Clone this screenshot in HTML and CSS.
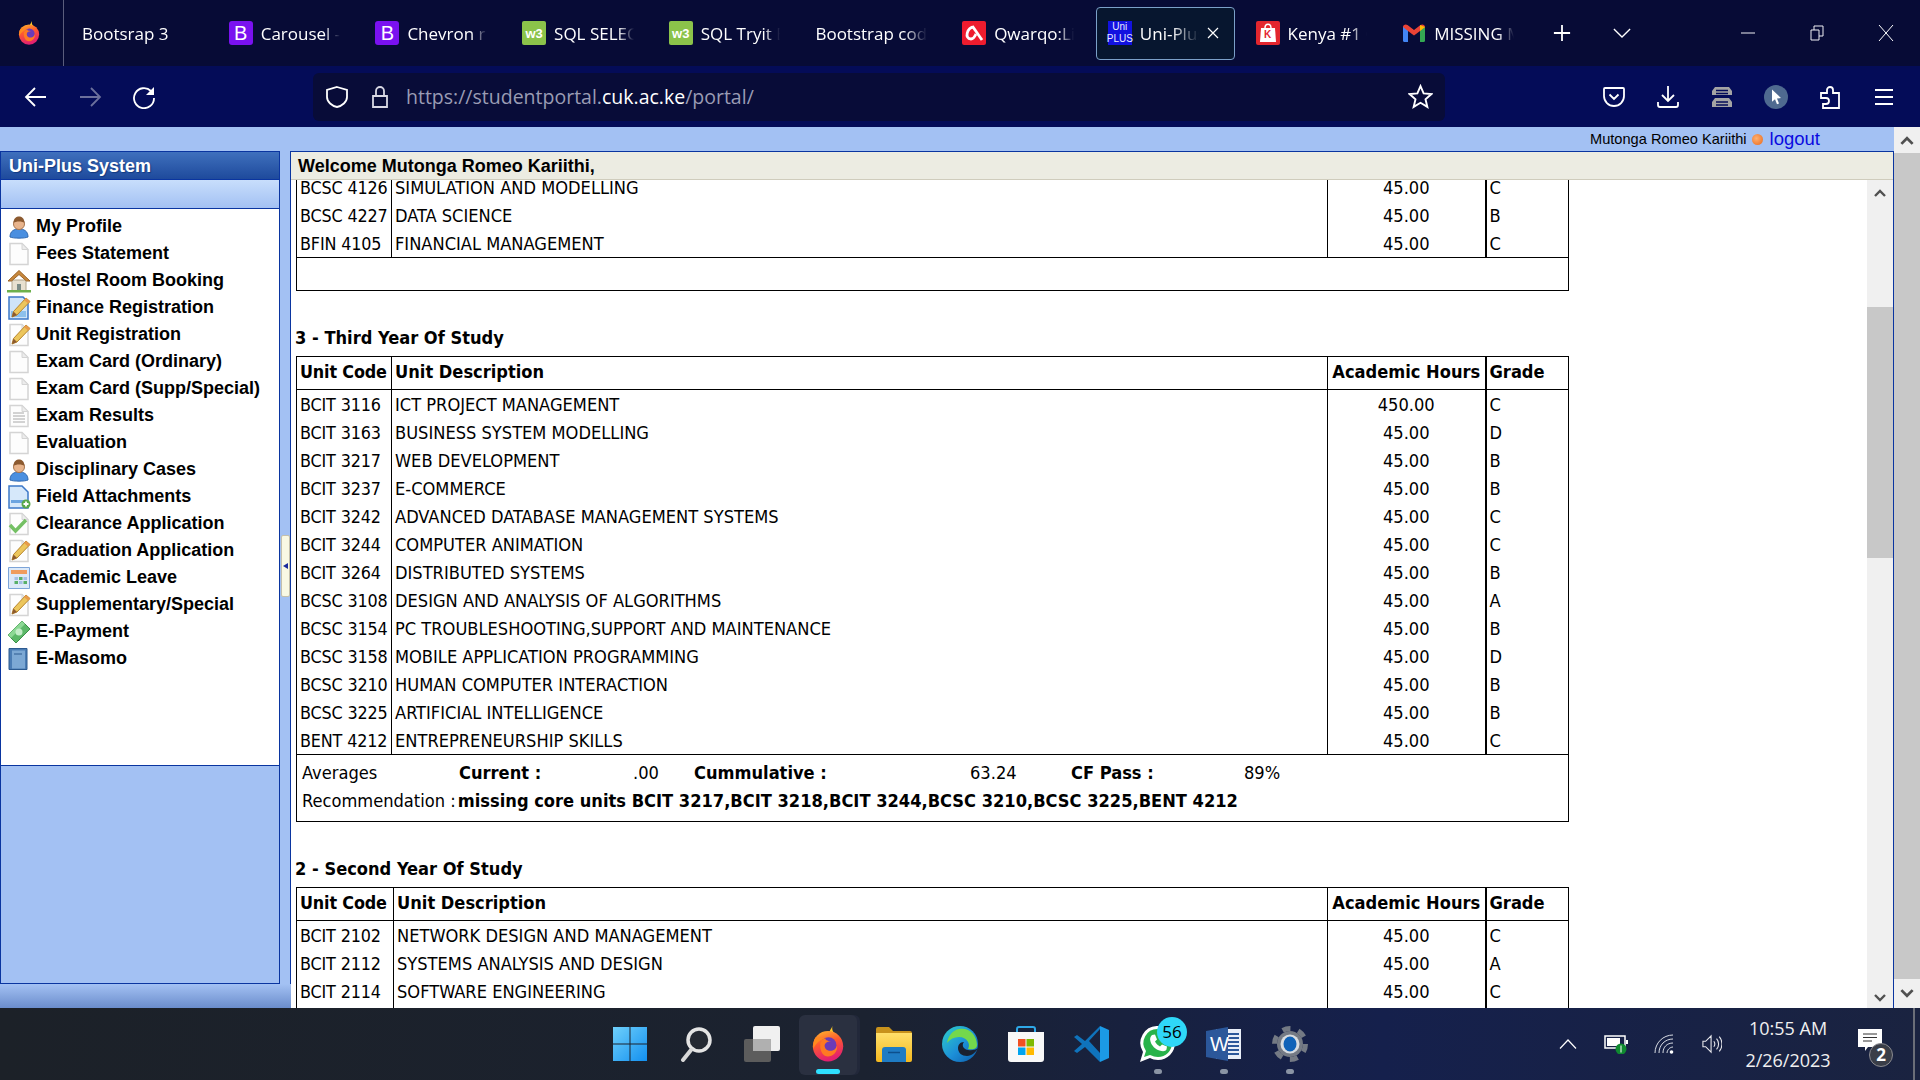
FILE: index.html
```html
<!DOCTYPE html>
<html lang="en">
<head>
    <meta charset="UTF-8">
    <title>Uni-Plus System</title>
    <link rel="stylesheet" href="styles.css">
</head>
<body>
    <svg class="defs" width="0" height="0">
        <defs>
            <linearGradient id="ffBody" x1="0" y1="0" x2="0.3" y2="1"><stop offset="0" stop-color="#ffbd2e"/><stop offset="0.45" stop-color="#ff5a2e"/><stop offset="1" stop-color="#e3216f"/></linearGradient>
            <linearGradient id="edgeG" x1="0" y1="0" x2="1" y2="1"><stop offset="0" stop-color="#2fd0c8"/><stop offset="0.55" stop-color="#1c8fd8"/><stop offset="1" stop-color="#0c5aa8"/></linearGradient>
            <linearGradient id="folderG" x1="0" y1="0" x2="0" y2="1"><stop offset="0" stop-color="#ffdf6b"/><stop offset="1" stop-color="#f5b91f"/></linearGradient>
            <linearGradient id="winG" x1="0" y1="0" x2="1" y2="1"><stop offset="0" stop-color="#6fd0fb"/><stop offset="1" stop-color="#1390f0"/></linearGradient>

            <symbol id="firefox" viewBox="0 0 32 32">
                <path fill="#ffc928" d="M20 0c-1 4 1 6 4 9 3 3 5 6 5 10L16 8c1-3 3-6 4-8z"/>
                <circle cx="16" cy="18" r="13.5" fill="url(#ffBody)"/>
                <path fill="#ff8a1e" d="M5 10c-2 3-2.500 7-2 10 3-6 7-9 12-9z"/>
                <circle cx="16.500" cy="17" r="7" fill="#6b3bb8"/>
                <path fill="#ff7a22" d="M9 17c0-3 2-6 5-6-1 2 3 2 6 3-4-1-7 1-7 3.500 0 3 3 5 6 4.500 3-.5 5-3 5-5 1 6-4 10-8 10-4 0-7-4-7-10z"/>
            </symbol>

            <!-- sidebar icons -->
            <symbol id="m-user" viewBox="0 0 24 24">
                <path fill="#4a8fe0" stroke="#2f68b0" d="M3 22c0-6 4-8 9-8s9 2 9 8c-3 1.500-15 1.500-18 0z"/>
                <circle cx="12" cy="9" r="5.500" fill="#e8b48c" stroke="#a8764e"/>
                <path fill="#8c5a30" d="M6.500 8c0-5 3-6.500 5.500-6.500S17.500 3 17.500 8c-2-2-9-2-11 0z"/>
            </symbol>
            <symbol id="m-page" viewBox="0 0 24 24">
                <path fill="#fdfdfd" stroke="#d4d4d4" stroke-width="1.500" d="M3 1.500h12l6 6v15H3z"/>
                <path fill="#ececec" stroke="#d4d4d4" d="M15 1.500v6h6z"/>
            </symbol>
            <symbol id="m-lines" viewBox="0 0 24 24">
                <use href="#m-page"/>
                <path stroke="#a8a8a8" d="M6 9h11M6 12h12M6 15h12M6 18h12"/>
            </symbol>
            <symbol id="m-house" viewBox="0 0 24 24">
                <path fill="#e8e0d0" stroke="#b0a48c" d="M5 11h14v11H5z"/>
                <path fill="#c8883c" stroke="#9c6428" d="M12 1.500 23 12h-3.500L12 5.500 4.500 12H1z"/>
                <path fill="#7c8c88" d="M10 15h4v7h-4z"/>
                <path fill="#6cb04c" d="M0 21h24v2.500H0z"/>
            </symbol>
            <symbol id="m-pencil" viewBox="0 0 24 24">
                <path fill="#ecc65c" stroke="#b8862c" d="M19 2l4 3.500L10 19l-5 2 1.500-5.500z"/>
                <path fill="#e89a4c" d="M19 2l4 3.500-2 2-4-3.500z"/>
                <path fill="#8c5a30" d="M6.500 15.500 10 19l-5 2z"/>
            </symbol>
            <symbol id="m-edit" viewBox="0 0 24 24">
                <use href="#m-page"/>
                <use href="#m-pencil"/>
            </symbol>
            <symbol id="m-finance" viewBox="0 0 24 24">
                <path fill="#cfe4f8" stroke="#3c78c8" stroke-width="1.500" d="M2 1h14l5 5v17H2z"/>
                <path fill="#8cc0ec" d="M4 15h15v6H4z"/>
                <use href="#m-pencil"/>
            </symbol>
            <symbol id="m-attach" viewBox="0 0 24 24">
                <path fill="#d6e8fa" stroke="#3c78c8" stroke-width="1.500" d="M2 1h13l6 6v16H2z"/>
                <path fill="#6ca4e0" d="M4 15h13v3H4z"/>
                <circle cx="19" cy="19" r="4.500" fill="#58a84c"/>
                <path stroke="#fff" stroke-width="1.800" d="M19 16.500v5M16.500 19h5"/>
            </symbol>
            <symbol id="m-check" viewBox="0 0 24 24">
                <use href="#m-page"/>
                <path fill="none" stroke="#74c064" stroke-width="3.500" d="M3 13l5.500 6L19 8"/>
            </symbol>
            <symbol id="m-calendar" viewBox="0 0 24 24">
                <path fill="#dce9f8" stroke="#7ca4d8" d="M1.500 1.500h21v21h-21z"/>
                <path fill="#ef9c5c" d="M4 4h16v4H4z"/>
                <path fill="#58b068" d="M12 11h3.500v3H12zM16.500 15h3.500v3h-3.500zM7.500 15H11v3H7.500z"/>
                <path fill="#a4c0e4" d="M7.500 11H11v3H7.500zM16.500 11h3.500v3h-3.500zM12 15h3.500v3H12z"/>
            </symbol>
            <symbol id="m-money" viewBox="0 0 24 24">
                <path fill="#5cb868" stroke="#3c9048" d="M1 15 15 1l8 8L9 23z"/>
                <path fill="#8cd894" d="M1 15 15 1l3 3L4 18z"/>
                <circle cx="12" cy="12" r="3.500" fill="#c4ecc8"/>
            </symbol>
            <symbol id="m-book" viewBox="0 0 24 24">
                <path fill="#4a7cb4" stroke="#2c5a90" d="M2 1.500h18v21H2z"/>
                <path fill="#7ca8d4" d="M5 3.500h13v18H5z"/>
                <path stroke="#2c5a90" d="M7 7h8"/>
            </symbol>

            <symbol id="chev-up" viewBox="0 0 12 8"><path fill="none" stroke="#505050" stroke-width="2.400" d="M1 7l5-5 5 5"/></symbol>
            <symbol id="chev-down" viewBox="0 0 12 8"><path fill="none" stroke="#505050" stroke-width="2.400" d="M1 1l5 5 5-5"/></symbol>
        </defs>
    </svg>

    <div class="tabbar">
        <div class="ff-btn"><svg class="tab-ico"><use href="#firefox"/></svg></div>
        <div class="tab"><span class="tab-text">Bootsrap 3</span></div>
        <div class="tab"><span class="tab-ico letter bs">B</span><span class="tab-text">Carousel -</span></div>
        <div class="tab"><span class="tab-ico letter bs">B</span><span class="tab-text">Chevron rig</span></div>
        <div class="tab"><span class="tab-ico letter w3">w3</span><span class="tab-text">SQL SELEC</span></div>
        <div class="tab"><span class="tab-ico letter w3">w3</span><span class="tab-text">SQL Tryit E</span></div>
        <div class="tab"><span class="tab-text">Bootstrap code</span></div>
        <div class="tab">
            <span class="tab-ico qw"><svg viewBox="0 0 24 24"><path fill="none" stroke="#fff" stroke-width="2.800" d="M12 6C5 6 2 18 9 18c3 0 4-3 5-5"/><path fill="none" stroke="#fff" stroke-width="2.800" d="M11 6l9 13"/></svg></span>
            <span class="tab-text">Qwarqo:Liv</span>
        </div>
        <div class="tab tab-active">
            <span class="tab-ico uni"><b>Uni</b><b>PLUS</b></span><span class="tab-text">Uni-Plus</span>
            <svg class="tab-close" viewBox="0 0 12 12"><path stroke="#fff" stroke-width="1.200" d="M1 1l10 10M11 1 1 11"/></svg>
        </div>
        <div class="tab">
            <span class="tab-ico kn"><svg viewBox="0 0 24 24"><path fill="#fff" d="M5 7h14l1 14H4z"/><path fill="none" stroke="#fff" stroke-width="1.500" d="M9 7c0-5 6-5 6 0"/></svg><i>K</i></span>
            <span class="tab-text">Kenya #1 O</span>
        </div>
        <div class="tab">
            <svg class="tab-ico" viewBox="0 0 24 24"><path fill="#4285f4" d="M1 6h5v15H2.500A1.500 1.500 0 0 1 1 19.500z"/><path fill="#34a853" d="M18 6h5v13.500a1.500 1.500 0 0 1-1.500 1.500H18z"/><path fill="#ea4335" d="M1 6c0-2 2.500-3.500 4.500-2L12 9l6.500-5c2-1.500 4.500 0 4.500 2l-5 4-6 4.500L6 10z"/><path fill="#fbbc04" d="M18 4l5 2-5 4z"/></svg>
            <span class="tab-text">MISSING M</span>
        </div>
        <div class="tab-actions">
            <svg class="tab-plus" viewBox="0 0 20 20"><path stroke="#fff" stroke-width="2" d="M10 1v18M1 10h18"/></svg>
            <svg class="tab-list" viewBox="0 0 20 12"><path fill="none" stroke="#fff" stroke-width="1.500" d="M1 1l9 9 9-9"/></svg>
        </div>
        <div class="win-btns">
            <svg viewBox="0 0 16 16"><path stroke="#f0f0f4" d="M1 8h14"/></svg>
            <svg viewBox="0 0 16 16"><path fill="none" stroke="#f0f0f4" d="M2 5h8v10H2zM5 5V1h9v10h-4"/></svg>
            <svg viewBox="0 0 16 16"><path stroke="#fff" d="M1 0l14 16M15 0 1 16"/></svg>
        </div>
    </div>

    <div class="navbar">
        <div class="nav-btn"><svg viewBox="0 0 24 24"><path fill="none" stroke="#fff" stroke-width="1.800" d="M22 12H3M11 3l-9 9 9 9"/></svg></div>
        <div class="nav-btn"><svg viewBox="0 0 24 24"><path fill="none" stroke="#6c709c" stroke-width="1.800" d="M2 12h19M13 3l9 9-9 9"/></svg></div>
        <div class="nav-btn"><svg viewBox="0 0 24 24"><path fill="none" stroke="#fff" stroke-width="1.800" d="M19 6a10 10 0 1 0 3 7"/><path fill="#fff" d="M22 2v8h-8z"/></svg></div>
        <div class="urlbar">
            <svg class="url-ico" viewBox="0 0 24 24"><path fill="none" stroke="#fff" stroke-width="1.800" d="M12 2 22 5v7c0 5-5 9-10 10C7 21 2 17 2 12V5z"/></svg>
            <svg class="url-ico" viewBox="0 0 24 24"><path fill="none" stroke="#d8d8e4" stroke-width="1.800" d="M5 11h14v11H5zM8 11V6a4 4 0 0 1 8 0v5"/></svg>
            <span class="url-text">https://studentportal.<b>cuk.ac.ke</b>/portal/</span>
            <svg class="url-star" viewBox="0 0 24 24"><path fill="none" stroke="#fff" stroke-width="1.800" d="m12 2 3 7 7.500.6-5.700 5 1.800 7.400L12 18l-6.600 4 1.800-7.400-5.700-5L9 9z"/></svg>
        </div>
        <div class="nav-right">
            <div class="nav-btn"><svg viewBox="0 0 24 24"><path fill="none" stroke="#fff" stroke-width="1.800" d="M3 3h18a1 1 0 0 1 1 1v7a10 10 0 0 1-20 0V4a1 1 0 0 1 1-1zM7.500 9.500 12 14l4.500-4.500"/></svg></div>
            <div class="nav-btn"><svg viewBox="0 0 24 24"><path fill="none" stroke="#fff" stroke-width="1.800" d="M12 1v15M6 10l6 6 6-6M2 17v3a2 2 0 0 0 2 2h16a2 2 0 0 0 2-2v-3"/></svg></div>
            <div class="nav-btn"><svg viewBox="0 0 24 24"><path fill="#a4a4a4" d="M5 2h14l3 4v4H2V6zM5 13h14l3 4v5H2v-5z"/><path stroke="#040c58" stroke-width="1.500" d="M6 5.500h12M6 8.500h12M6 17h12M6 20h12"/></svg></div>
            <div class="nav-btn"><svg viewBox="0 0 24 24"><circle cx="12" cy="12" r="12" fill="#4f6a90"/><path fill="#fff" d="M8 4.500 17 13l-4 .5 2 5-2 .8-2-5-3 2.500z"/></svg></div>
            <div class="nav-btn"><svg viewBox="0 0 24 24"><path fill="none" stroke="#fff" stroke-width="1.800" d="M9 8V5a3 3 0 0 1 6 0v3h6v15H5v-4h3a3 3 0 0 0 0-6H3V8z"/></svg></div>
            <div class="nav-btn"><svg viewBox="0 0 24 24"><path stroke="#fff" stroke-width="1.800" d="M3 5h18M3 12h18M3 19h18"/></svg></div>
        </div>
    </div>

    <div class="page">
        <div class="page-main">
            <div class="userbar">
                <span class="user-name">Mutonga Romeo Kariithi</span>
                <span class="user-dot"></span>
                <a class="logout">logout</a>
            </div>
            <div class="layout">
                <div class="west">
                    <div class="west-row">
                        <div class="sidebar">
                            <div class="side-head">Uni-Plus System</div>
                            <div class="side-strip"></div>
                            <ul class="side-menu">
                                <li><svg><use href="#m-user"/></svg>My Profile</li>
                                <li><svg><use href="#m-page"/></svg>Fees Statement</li>
                                <li><svg><use href="#m-house"/></svg>Hostel Room Booking</li>
                                <li><svg><use href="#m-finance"/></svg>Finance Registration</li>
                                <li><svg><use href="#m-edit"/></svg>Unit Registration</li>
                                <li><svg><use href="#m-page"/></svg>Exam Card (Ordinary)</li>
                                <li><svg><use href="#m-page"/></svg>Exam Card (Supp/Special)</li>
                                <li><svg><use href="#m-lines"/></svg>Exam Results</li>
                                <li><svg><use href="#m-page"/></svg>Evaluation</li>
                                <li><svg><use href="#m-user"/></svg>Disciplinary Cases</li>
                                <li><svg><use href="#m-attach"/></svg>Field Attachments</li>
                                <li><svg><use href="#m-check"/></svg>Clearance Application</li>
                                <li><svg><use href="#m-edit"/></svg>Graduation Application</li>
                                <li><svg><use href="#m-calendar"/></svg>Academic Leave</li>
                                <li><svg><use href="#m-edit"/></svg>Supplementary/Special</li>
                                <li><svg><use href="#m-money"/></svg>E-Payment</li>
                                <li><svg><use href="#m-book"/></svg>E-Masomo</li>
                            </ul>
                        </div>
                        <div class="splitter"><div class="split-handle"></div></div>
                    </div>
                    <div class="west-foot"></div>
                </div>

                <div class="center">
                    <div class="center-head">Welcome Mutonga Romeo Kariithi,</div>
                    <div class="center-body">
                        <div class="content">
                            <table class="units units-scrolled">
                                <colgroup><col class="c-code"><col><col class="c-hours"><col class="c-grade"></colgroup>
                                <tr><td>BCSC 4126</td><td>SIMULATION AND MODELLING</td><td class="num">45.00</td><td>C</td></tr>
                                <tr><td>BCSC 4227</td><td>DATA SCIENCE</td><td class="num">45.00</td><td>B</td></tr>
                                <tr><td>BFIN 4105</td><td>FINANCIAL MANAGEMENT</td><td class="num">45.00</td><td>C</td></tr>
                                <tr class="summary"><td colspan="4" class="empty"></td></tr>
                            </table>

                            <h3 class="year-title">3 - Third Year Of Study</h3>
                            <table class="units">
                                <colgroup><col class="c-code"><col><col class="c-hours"><col class="c-grade"></colgroup>
                                <tr class="head"><th>Unit Code</th><th>Unit Description</th><th>Academic Hours</th><th>Grade</th></tr>
                                <tr><td>BCIT 3116</td><td>ICT PROJECT MANAGEMENT</td><td class="num">450.00</td><td>C</td></tr>
                                <tr><td>BCIT 3163</td><td>BUSINESS SYSTEM MODELLING</td><td class="num">45.00</td><td>D</td></tr>
                                <tr><td>BCIT 3217</td><td>WEB DEVELOPMENT</td><td class="num">45.00</td><td>B</td></tr>
                                <tr><td>BCIT 3237</td><td>E-COMMERCE</td><td class="num">45.00</td><td>B</td></tr>
                                <tr><td>BCIT 3242</td><td>ADVANCED DATABASE MANAGEMENT SYSTEMS</td><td class="num">45.00</td><td>C</td></tr>
                                <tr><td>BCIT 3244</td><td>COMPUTER ANIMATION</td><td class="num">45.00</td><td>C</td></tr>
                                <tr><td>BCIT 3264</td><td>DISTRIBUTED SYSTEMS</td><td class="num">45.00</td><td>B</td></tr>
                                <tr><td>BCSC 3108</td><td>DESIGN AND ANALYSIS OF ALGORITHMS</td><td class="num">45.00</td><td>A</td></tr>
                                <tr><td>BCSC 3154</td><td>PC TROUBLESHOOTING,SUPPORT AND MAINTENANCE</td><td class="num">45.00</td><td>B</td></tr>
                                <tr><td>BCSC 3158</td><td>MOBILE APPLICATION PROGRAMMING</td><td class="num">45.00</td><td>D</td></tr>
                                <tr><td>BCSC 3210</td><td>HUMAN COMPUTER INTERACTION</td><td class="num">45.00</td><td>B</td></tr>
                                <tr><td>BCSC 3225</td><td>ARTIFICIAL INTELLIGENCE</td><td class="num">45.00</td><td>B</td></tr>
                                <tr><td>BENT 4212</td><td>ENTREPRENEURSHIP SKILLS</td><td class="num">45.00</td><td>C</td></tr>
                                <tr class="summary">
                                    <td colspan="4">
                                        <div class="averages">
                                            <span>Averages</span>
                                            <b>Current :</b>
                                            <span>.00</span>
                                            <b>Cummulative :</b>
                                            <span>63.24</span>
                                            <b>CF Pass :</b>
                                            <span>89%</span>
                                        </div>
                                        <div class="recommend">Recommendation : <b>missing core units BCIT 3217,BCIT 3218,BCIT 3244,BCSC 3210,BCSC 3225,BENT 4212</b></div>
                                    </td>
                                </tr>
                            </table>

                            <h3 class="year-title">2 - Second Year Of Study</h3>
                            <table class="units units-wide">
                                <colgroup><col class="c-code"><col><col class="c-hours"><col class="c-grade"></colgroup>
                                <tr class="head"><th>Unit Code</th><th>Unit Description</th><th>Academic Hours</th><th>Grade</th></tr>
                                <tr><td>BCIT 2102</td><td>NETWORK DESIGN AND MANAGEMENT</td><td class="num">45.00</td><td>C</td></tr>
                                <tr><td>BCIT 2112</td><td>SYSTEMS ANALYSIS AND DESIGN</td><td class="num">45.00</td><td>A</td></tr>
                                <tr><td>BCIT 2114</td><td>SOFTWARE ENGINEERING</td><td class="num">45.00</td><td>C</td></tr>
                                <tr><td>&nbsp;</td><td></td><td></td><td></td></tr>
                            </table>
                        </div>
                        <div class="scroll-inner">
                            <div class="scroll-btn"><svg><use href="#chev-up"/></svg></div>
                            <div class="scroll-thumb"></div>
                            <div class="scroll-rest"><svg><use href="#chev-down"/></svg></div>
                        </div>
                    </div>
                </div>
            </div>
        </div>
        <div class="scroll-outer">
            <div class="outer-btn"><svg><use href="#chev-up"/></svg></div>
            <div class="outer-thumb"></div>
            <div class="outer-btn outer-btn-down"><svg><use href="#chev-down"/></svg></div>
        </div>
    </div>

    <div class="taskbar">
        <div></div>
        <div class="task-apps">
            <div class="app">
                <svg viewBox="0 0 36 36"><path fill="url(#winG)" d="M1 1h16.500v16.500H1zM18.500 1H35v16.500H18.500zM1 18.500h16.500V35H1zM18.500 18.500H35V35H18.500z"/></svg>
            </div>
            <div class="app">
                <svg viewBox="0 0 36 36"><circle cx="21" cy="14" r="11" fill="#252a33" stroke="#e4e4e4" stroke-width="3.500"/><path stroke="#d8d8d8" stroke-width="4" stroke-linecap="round" d="M13 24 5 34"/></svg>
            </div>
            <div class="app">
                <svg viewBox="0 0 36 36"><rect x="0" y="13" width="27" height="23" rx="2" fill="#5c5c5c"/><rect x="9" y="0" width="27" height="25" rx="2" fill="#f0f0f0"/><rect x="9" y="13" width="18" height="12" fill="#b0b0b0"/></svg>
            </div>
            <div class="app app-active">
                <svg viewBox="0 0 32 32"><use href="#firefox"/></svg>
            </div>
            <div class="app">
                <svg viewBox="0 0 36 36"><path fill="#c8921c" d="M0 3a2 2 0 0 1 2-2h11l4 4h17a2 2 0 0 1 2 2v4H0z"/><path fill="url(#folderG)" d="M0 7h36v27a2 2 0 0 1-2 2H2a2 2 0 0 1-2-2z"/><path fill="#1f7cc4" d="M6 24a3 3 0 0 1 3-3h18a3 3 0 0 1 3 3v12H6z"/><path stroke="#0d4f8c" stroke-width="1.500" d="M12 26.500h12"/></svg>
            </div>
            <div class="app">
                <svg viewBox="0 0 36 36"><circle cx="18" cy="18" r="18" fill="url(#edgeG)"/><path fill="#74d84c" d="M17 3c10-2 18 6 18 16 0 4-4 5-9 4 3-5-1-12-9-12-5 0-9 2-12 6 1-7 6-13 12-14z"/><path fill="#1a2130" d="M36 22c-2 4-6 8-11 8-5 0-9-3-9-8 0-3 2-6 6-6-2 2-2 7 4 8 4 .5 8 0 10-2z"/></svg>
            </div>
            <div class="app">
                <svg viewBox="0 0 36 36"><path fill="none" stroke="#2ea8e8" stroke-width="2" d="M9 8V3a2 2 0 0 1 2-2h14a2 2 0 0 1 2 2v5"/><path fill="#f8f8f8" d="M0 6h36v27a3 3 0 0 1-3 3H3a3 3 0 0 1-3-3z"/><path fill="#f25022" d="M10 13h7.500v7.500H10z"/><path fill="#7fba00" d="M18.500 13H26v7.500h-7.500z"/><path fill="#00a4ef" d="M10 21.500h7.500V29H10z"/><path fill="#ffb900" d="M18.500 21.500H26V29h-7.500z"/></svg>
            </div>
            <div class="app">
                <svg viewBox="0 0 36 36"><path fill="#1b9ae6" d="M26 0l9 4v28l-9 4z"/><path fill="#0f73bc" d="M26 0 11 15 3 9 0 11l8 7-8 7 3 2 8-6 15 15v-9l-11-12 11-12z"/></svg>
            </div>
            <div class="app app-dot">
                <svg viewBox="0 0 36 36"><path fill="#fff" d="M18 0a17 17 0 0 1 0 34c-3 0-6-1-8-2L0 36l3-10A17 17 0 0 1 18 0z"/><path fill="#29b34a" d="M18 3a14 14 0 0 1 0 28c-3 0-5-1-8-2l-6 2 2-6A14 14 0 0 1 18 3z"/><path fill="#fff" d="M12 9l3-.5 2 5-2 2c1 2 3 4 5 5l2-2 5 2-.5 3c-1 2-4 2-7 1-4-1-8-5-9-9-1-3 0-5 1.500-6.500z"/></svg>
                <span class="app-badge">56</span>
            </div>
            <div class="app app-dot">
                <svg viewBox="0 0 36 36"><path fill="#e8eef8" d="M10 3h25v30H10z"/><path stroke="#2b579a" stroke-width="2" d="M22 8h11M22 12h11M22 16h11M22 20h11M22 24h11M22 28h11"/><path fill="#2b579a" d="M0 5 22 1v34L0 31z"/></svg>
                <span class="word-w">W</span>
            </div>
            <div class="app app-dot">
                <svg viewBox="0 0 36 36"><circle cx="18" cy="18" r="13" fill="#747a84"/><circle cx="18" cy="18" r="15.500" fill="none" stroke="#747a84" stroke-width="5" stroke-dasharray="8.100 8.130"/><circle cx="18" cy="18" r="9.500" fill="#d8dce0"/><ellipse cx="18" cy="18" rx="6.500" ry="7.500" fill="#0f62b8"/></svg>
            </div>
        </div>
        <div class="tray">
            <div class="tray-slot"><svg class="tray-chev" viewBox="0 0 18 10"><path fill="none" stroke="#fff" stroke-width="1.200" d="M1 9.500 9 1l8 8.500"/></svg></div>
            <div class="tray-slot">
                <svg class="tray-batt" viewBox="0 0 24 20"><path fill="none" stroke="#fff" stroke-width="1.500" d="M1 2h20v12H1z"/><path fill="#fff" d="M3 4h13v8H3zM22 6h2v4h-2z"/><circle cx="17" cy="15" r="5.500" fill="#0f8a30"/><path stroke="#fff" d="M17 11.500v7"/></svg>
            </div>
            <div class="tray-slot"><svg class="tray-ico" viewBox="0 0 20 20"><path fill="none" stroke="#d8dce4" d="M1 19C1 9 9 1 19 1M5 19C5 11 11 5 19 5M9 19c0-6 4-10 10-10M13 19c0-3 3-6 6-6"/><circle cx="17.500" cy="18" r="1.800" fill="#fff"/></svg></div>
            <div class="tray-slot"><svg class="tray-ico" viewBox="0 0 22 20"><path fill="none" stroke="#e8e8ec" stroke-width="1.200" d="M1 7h3l6-6v18l-6-6H1zM13 7c1.500 2 1.500 4 0 6M16 4c3 3.500 3 8.500 0 12M19 2c4 4.500 4 11.500 0 16"/></svg></div>
            <div class="tray-clock">
                <div>10:55 AM</div>
                <div>2/26/2023</div>
            </div>
            <div class="tray-note">
                <svg viewBox="0 0 24 24"><path fill="#fff" d="M0 0h24v18H10l-3 4v-4H0z"/><path stroke="#333" d="M5 5h14M5 8.500h14M5 12h9"/></svg>
                <span class="note-badge">2</span>
            </div>
            <div class="tray-edge"></div>
        </div>
    </div>
</body>
</html>
```

FILE: styles.css
```css
body {
    margin: 0;
    height: 1080px;
    display: flex;
    flex-direction: column;
    overflow: hidden;
    font-family: "Liberation Sans", Arial, sans-serif;
    color: #000;
}
svg {
    display: block;
}
.defs {
    position: absolute;
}

/* browser tabs */
.tabbar {
    height: 66px;
    display: flex;
    align-items: center;
    background-color: #070b36;
    font-family: "Open Sans", sans-serif;
    font-size: 17px;
    color: #fff;
}
.ff-btn {
    width: 64px;
    height: 100%;
    display: flex;
    align-items: center;
    justify-content: center;
    padding-right: 5px;
    box-sizing: border-box;
    border-right: 1px solid #5a5d7c;
    margin-right: 1px;
}
.tab {
    width: 146.7px;
    flex-shrink: 0;
    height: 53px;
    display: flex;
    align-items: center;
    gap: 8px;
    padding: 0 18px 0 17px;
    box-sizing: border-box;
}
.tab-ico {
    width: 24px;
    height: 24px;
    flex-shrink: 0;
    border-radius: 3px;
}
.letter {
    display: flex;
    align-items: center;
    justify-content: center;
    font-family: "Liberation Sans", sans-serif;
    color: #fff;
}
.bs {
    background-color: #7a11f0;
    font-size: 20px;
}
.w3 {
    background-color: #8bc34a;
    font-size: 13px;
    font-weight: bold;
    border-radius: 2px;
}
.qw {
    background-color: #ee1c2e;
    border-radius: 2px;
}
.uni {
    background-color: #1212e0;
    border-radius: 0;
    display: flex;
    flex-direction: column;
    align-items: center;
    justify-content: center;
    font-family: "Liberation Sans", sans-serif;
    font-size: 10px;
    line-height: 12px;
    color: #e8e8ff;
}
.uni b {
    font-weight: normal;
}
.kn {
    background-color: #e3262e;
    border-radius: 2px;
    position: relative;
}
.kn i {
    position: absolute;
    left: 0;
    right: 0;
    top: 8px;
    text-align: center;
    font: bold 10px "Liberation Sans", sans-serif;
    color: #e3262e;
}
.tab-text {
    flex: 1;
    min-width: 0;
    overflow: hidden;
    white-space: nowrap;
    -webkit-mask-image: linear-gradient(90deg, #000 80%, transparent 100%);
    mask-image: linear-gradient(90deg, #000 80%, transparent 100%);
}
.tab-active {
    padding-left: 11px;
    padding-right: 10px;
    margin-left: 4px;
    margin-right: 3.7px;
    width: 139px;
    background-color: #07162f;
    border: 1px solid #7ba0c8;
    border-radius: 4px;
}
.tab-active .tab-text {
    -webkit-mask-image: linear-gradient(90deg, #000 50%, transparent 92%);
    mask-image: linear-gradient(90deg, #000 50%, transparent 92%);
}
.tab-close {
    width: 12px;
    height: 12px;
    margin-left: -5px;
    margin-right: 5px;
    flex-shrink: 0;
}
.tab-actions {
    display: flex;
    align-items: center;
    margin-left: 21px;
    gap: 42px;
}
.tab-plus {
    width: 18px;
    height: 18px;
}
.tab-list {
    width: 18px;
    height: 11px;
}
.win-btns {
    margin-left: auto;
    display: flex;
    align-items: center;
    gap: 53px;
    padding-right: 26px;
}
.win-btns svg {
    width: 16px;
    height: 16px;
}

/* browser toolbar */
.navbar {
    height: 61px;
    display: flex;
    align-items: center;
    padding: 0 9px 0 9px;
    background-color: #040c58;
}
.nav-btn {
    width: 54px;
    height: 48px;
    display: flex;
    align-items: center;
    justify-content: center;
}
.nav-btn svg {
    width: 24px;
    height: 24px;
}
.urlbar {
    width: 1132px;
    height: 48px;
    margin-left: 142px;
    padding: 0 12px;
    box-sizing: border-box;
    display: flex;
    align-items: center;
    gap: 19px;
    background-color: #080c38;
    border-radius: 6px;
    font-family: "Open Sans", sans-serif;
    font-size: 19.5px;
    color: #9a9cb4;
}
.url-ico {
    width: 24px;
    height: 24px;
    flex-shrink: 0;
}
.url-text {
    margin-left: -5px;
}
.url-text b {
    font-weight: normal;
    color: #fff;
}
.url-star {
    width: 25px;
    height: 25px;
    margin-left: auto;
}
.nav-right {
    margin-left: auto;
    display: flex;
}

/* page */
.page {
    height: 881px;
    display: flex;
    background-color: #a3c1f3;
}
.page-main {
    flex: 1;
    min-width: 0;
    display: flex;
    flex-direction: column;
}
.userbar {
    height: 24px;
    display: flex;
    align-items: center;
    justify-content: flex-end;
    padding-right: 74px;
    font-size: 14.6px;
}
.user-dot {
    width: 11px;
    height: 11px;
    margin: 0 7px 0 5px;
    border-radius: 50%;
    background: radial-gradient(circle at 40% 40%, #ffb070, #e8681c);
}
.logout {
    color: #0a0ae0;
    font-size: 18.5px;
}
.layout {
    flex: 1;
    min-height: 0;
    display: flex;
}
.west {
    width: 291px;
    flex-shrink: 0;
    display: flex;
    flex-direction: column;
}
.west-row {
    height: 833px;
    display: flex;
}
.west-foot {
    flex: 1;
    background: linear-gradient(#a3c1f3, #6b8dcc);
}
.sidebar {
    width: 280px;
    flex-shrink: 0;
    box-sizing: border-box;
    display: flex;
    flex-direction: column;
    border: 1px solid #0a35a0;
}
.side-head {
    height: 27px;
    box-sizing: border-box;
    padding-left: 8px;
    line-height: 28px;
    font-size: 18px;
    font-weight: bold;
    color: #fff;
    text-shadow: 1px 1px 1px #123a80;
    background: linear-gradient(#3f70bd, #1e4a9c);
}
.side-strip {
    height: 29px;
    border-top: 1px solid #0a35a0;
    box-sizing: border-box;
    background: linear-gradient(#c8defc, #a3c1f3);
}
.side-menu {
    height: 558px;
    box-sizing: border-box;
    margin: 0;
    padding: 4px 0 0 0;
    list-style: none;
    background-color: #fff;
    border-top: 1px solid #0a35a0;
    border-bottom: 1px solid #0a35a0;
}
.side-menu li {
    height: 27px;
    display: flex;
    align-items: center;
    gap: 5px;
    padding-left: 6px;
    font-size: 18px;
    font-weight: bold;
}
.side-menu svg {
    width: 24px;
    height: 24px;
    flex-shrink: 0;
}
.splitter {
    flex: 1;
    display: flex;
    align-items: center;
    justify-content: center;
    border-right: 1px solid #0a35a0;
}
.split-handle {
    width: 9px;
    height: 62px;
    margin: 0 0 4px 1px;
    box-sizing: border-box;
    display: flex;
    align-items: center;
    justify-content: center;
    background-color: #f9f9e4;
    border: 1px solid #c4c0ac;
    border-radius: 2px;
}
.split-handle::before {
    content: "";
    border: 3.5px solid transparent;
    border-left-width: 0;
    border-right: 5px solid #1a2a9c;
}

/* main panel */
.center {
    flex: 1;
    min-width: 0;
    display: flex;
    flex-direction: column;
    border-top: 1px solid #0a35a0;
    border-right: 1px solid #0a35a0;
    background-color: #fff;
}
.center-head {
    height: 28px;
    box-sizing: border-box;
    flex-shrink: 0;
    padding-left: 7px;
    line-height: 28px;
    font-size: 18px;
    font-weight: bold;
    background-color: #ecece2;
    border-bottom: 1px solid #cfccbc;
}
.center-body {
    flex: 1;
    min-height: 0;
    display: flex;
}
.content {
    flex: 1;
    min-width: 0;
    overflow: hidden;
    padding-left: 5px;
    font-family: "DejaVu Sans", sans-serif;
    font-stretch: condensed;
    font-size: 18.1px;
}
.units {
    width: 1273px;
    table-layout: fixed;
    border-collapse: collapse;
    border: 1px solid #000;
}
.units-scrolled {
    margin-top: -8px;
}
.c-code {
    width: 95px;
}
.units-wide .c-code {
    width: 97px;
}
.c-hours {
    width: 158px;
}
.c-grade {
    width: 83px;
}
.units td, .units th {
    height: 28px;
    padding: 0 3px;
    border-left: 1px solid #000;
    white-space: nowrap;
    overflow: hidden;
}
.units td:first-child, .units th:first-child {
    border-left: 0;
    font-size: 17.8px;
    letter-spacing: -0.15px;
}
.units td:nth-child(4), .units th:nth-child(4) {
    border-left-width: 2px;
}
.units .head th {
    height: 28px;
    padding-bottom: 4px;
    text-align: left;
    border-bottom: 1px solid #000;
}
.units .head th:nth-child(3) {
    text-align: center;
}
.units td.num {
    text-align: center;
}
.units .summary td {
    border-top: 1px solid #000;
    height: auto;
    padding: 4px 5px 6px;
    font-size: 18.1px;
    letter-spacing: 0;
}
.units .summary td.empty {
    height: 33px;
    padding: 0;
    box-sizing: border-box;
}
.year-title {
    margin: 36px 0 8px -1px;
    height: 21px;
    line-height: 21px;
    font-size: 18.1px;
    font-weight: bold;
}
.averages {
    display: grid;
    grid-template-columns: 157px 174px 61px 276px 101px 173px auto;
    height: 28px;
    line-height: 28px;
}
.recommend {
    height: 28px;
    line-height: 28px;
}
.recommend b {
    margin-left: -3px;
}

/* scrollbars */
.scroll-inner {
    width: 26px;
    flex-shrink: 0;
    display: flex;
    flex-direction: column;
    background-color: #f0f0f0;
}
.scroll-btn {
    height: 127px;
    display: flex;
    justify-content: center;
    padding-top: 9px;
    box-sizing: border-box;
}
.scroll-thumb {
    height: 251px;
    background-color: #c8c8c8;
}
.scroll-rest {
    flex: 1;
    display: flex;
    align-items: flex-end;
    justify-content: center;
    padding-bottom: 6px;
}
.scroll-inner svg {
    width: 12px;
    height: 8px;
}
.scroll-outer svg {
    width: 14px;
    height: 9px;
}
.scroll-outer {
    width: 26px;
    flex-shrink: 0;
    display: flex;
    flex-direction: column;
}
.outer-btn {
    height: 26px;
    display: flex;
    align-items: center;
    justify-content: center;
    background-color: #f0f0f0;
}
.outer-btn-down {
    height: 29px;
}
.outer-thumb {
    flex: 1;
    background-color: #c8c8c8;
}

/* windows taskbar */
.taskbar {
    flex: 1;
    display: grid;
    grid-template-columns: 1fr auto 1fr;
    background: linear-gradient(90deg, #1c2128 0%, #1b2230 45%, #15204c 72%, #1a2340 100%);
    color: #fff;
}
.task-apps {
    display: flex;
}
.app {
    width: 66px;
    height: 72px;
    display: flex;
    align-items: center;
    justify-content: center;
    position: relative;
}
.app svg {
    width: 36px;
    height: 36px;
}
.app-active::before {
    content: "";
    position: absolute;
    left: 4px;
    right: 4px;
    top: 7px;
    bottom: 5px;
    background-color: #2a3040;
    border-radius: 6px;
    box-shadow: 3px 0 0 #22283a;
}
.app-active svg {
    position: relative;
}
.app-active::after, .app-dot::after {
    content: "";
    position: absolute;
    bottom: 6px;
    left: 50%;
    width: 8px;
    height: 5px;
    margin-left: -4px;
    border-radius: 3px;
    background-color: #8a94a4;
}
.app-active::after {
    width: 24px;
    margin-left: -12px;
    background-color: #2fe0ff;
}
.app-badge {
    position: absolute;
    left: 32px;
    top: 9px;
    width: 30px;
    height: 30px;
    border-radius: 50%;
    background-color: #2fd8f8;
    color: #000;
    font: 17px/30px "Open Sans", sans-serif;
    text-align: center;
}
.word-w {
    position: absolute;
    left: 19px;
    top: 25px;
    font: 20px/22px "Liberation Sans", sans-serif;
    color: #fff;
}
.tray {
    display: flex;
    justify-content: flex-end;
    align-items: center;
}
.tray-slot {
    width: 48px;
    display: flex;
    justify-content: center;
}
.tray-chev {
    width: 18px;
    height: 10px;
}
.tray-batt {
    width: 24px;
    height: 20px;
}
.tray-ico {
    width: 20px;
    height: 20px;
}
.tray-clock {
    width: 104px;
    text-align: center;
    font-family: "Open Sans", sans-serif;
    font-size: 18px;
    line-height: 32px;
    color: #f0f0f0;
}
.tray-note {
    width: 60px;
    height: 72px;
    position: relative;
    display: flex;
    align-items: center;
    justify-content: center;
}
.tray-note svg {
    width: 24px;
    height: 24px;
    margin-bottom: 6px;
}
.note-badge {
    position: absolute;
    left: 29px;
    top: 35px;
    width: 22px;
    height: 22px;
    border: 1px solid #8a8a90;
    border-radius: 50%;
    background-color: #3a3e48;
    font: bold 17px/22px "Open Sans", sans-serif;
    text-align: center;
}
.tray-edge {
    width: 2px;
    height: 72px;
    margin: 0 5px 0 13px;
    background-color: #6a6e78;
}
```
